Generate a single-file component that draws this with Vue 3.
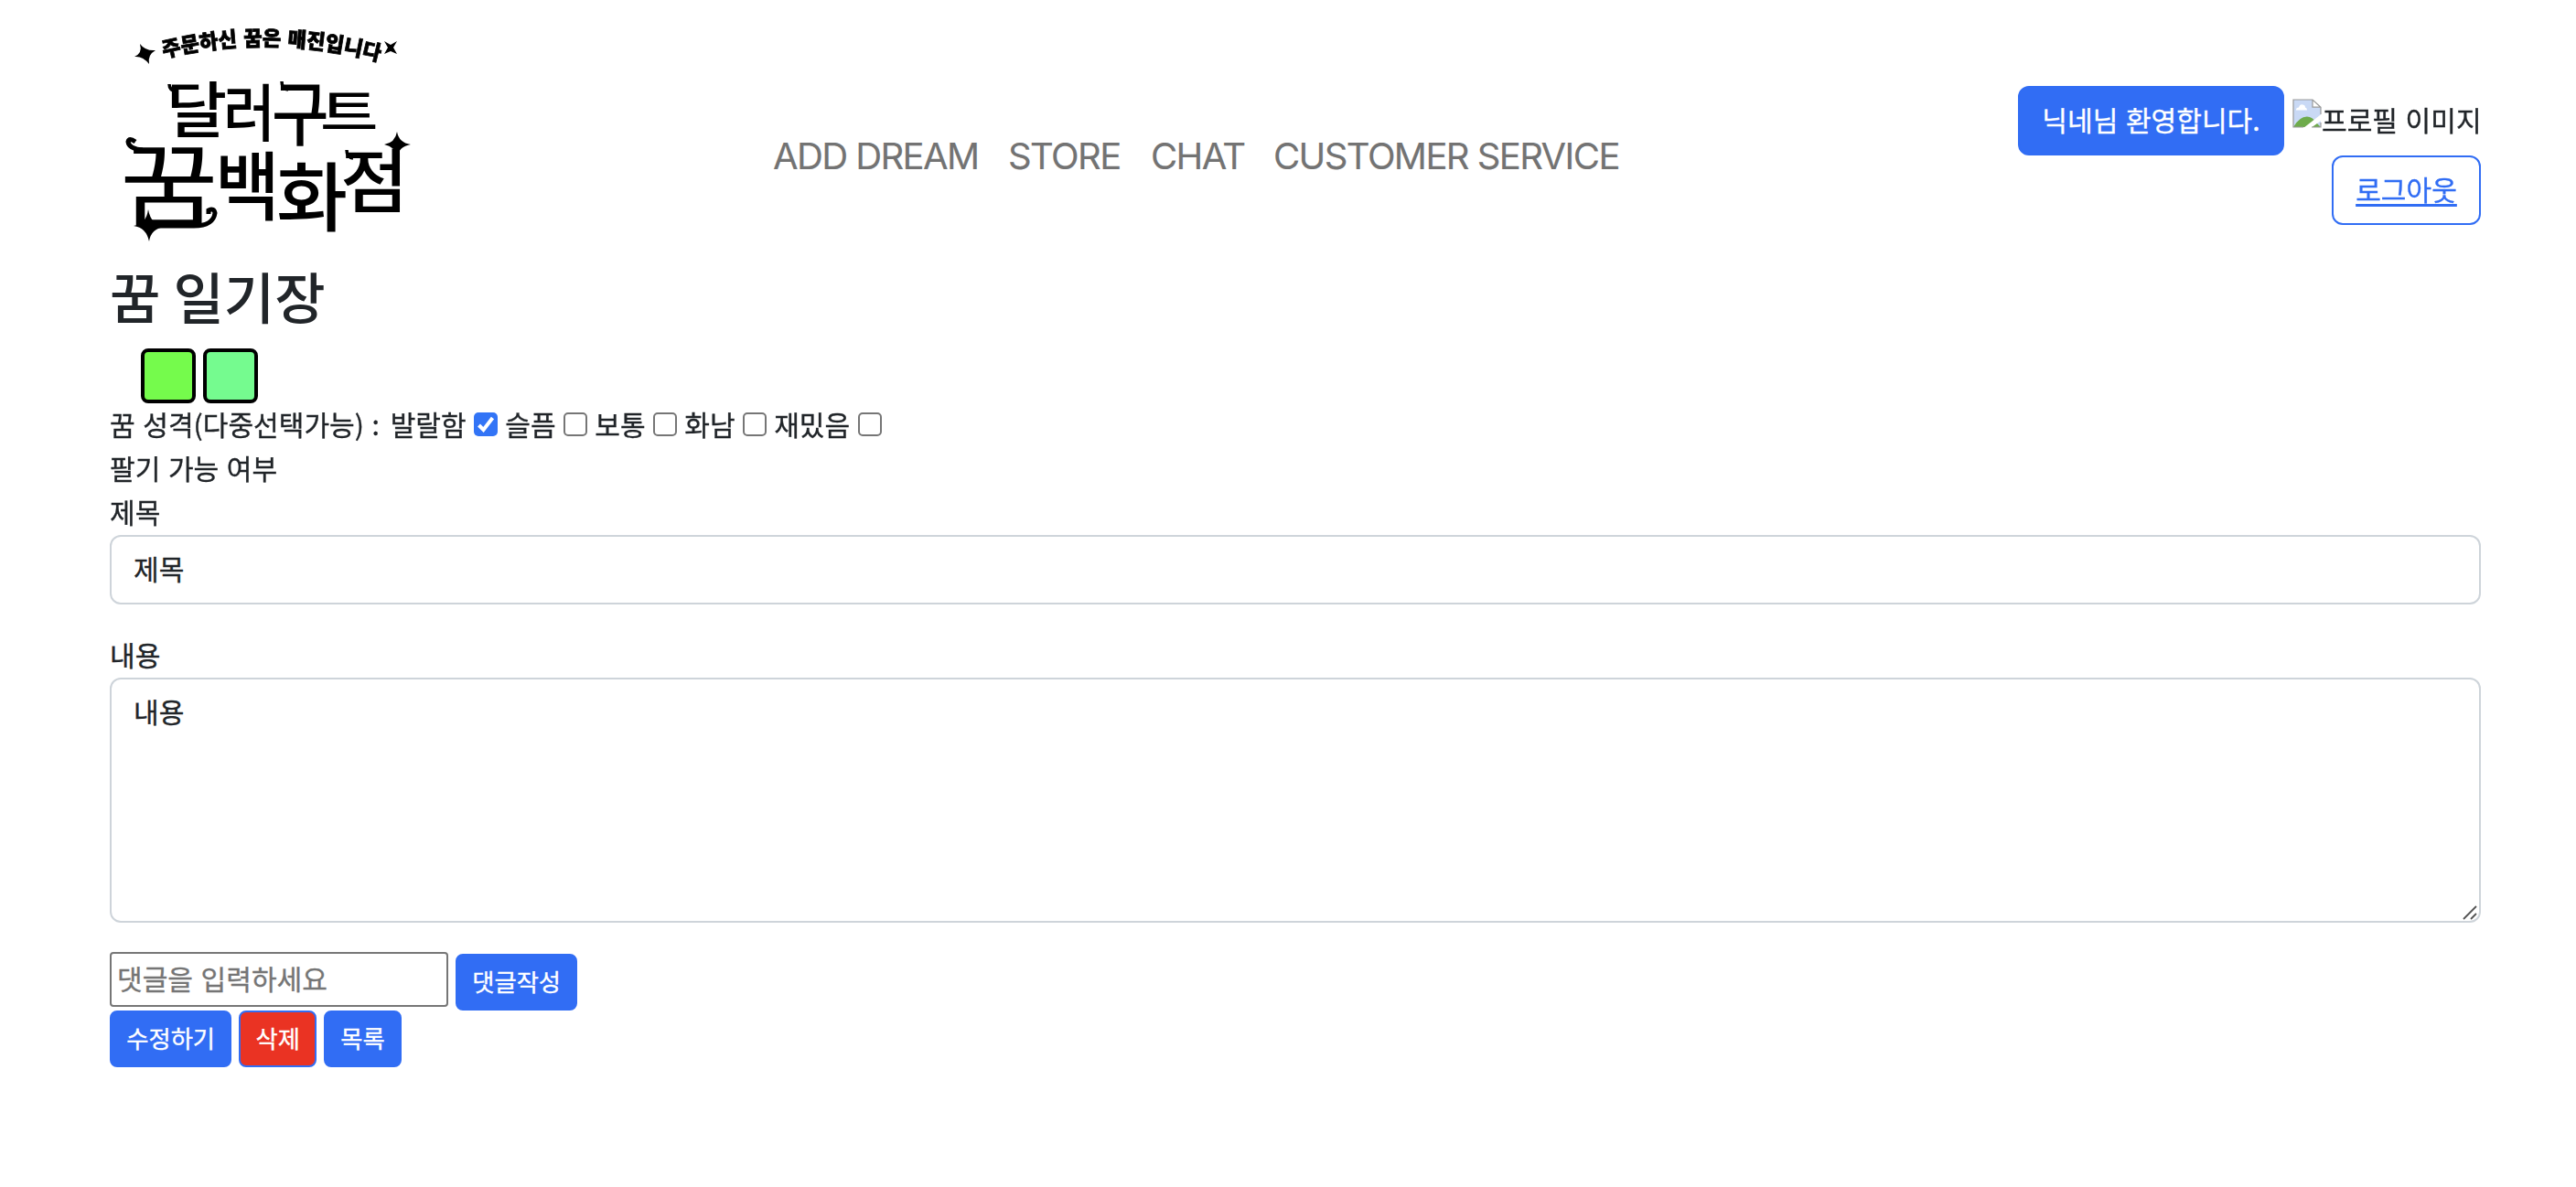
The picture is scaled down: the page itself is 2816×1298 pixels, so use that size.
<script setup>
import { ref } from 'vue'

const menus = [
  { label: 'ADD DREAM', cls: 'm-add' },
  { label: 'STORE', cls: 'm-store' },
  { label: 'CHAT', cls: 'm-chat' },
  { label: 'CUSTOMER SERVICE', cls: 'm-cs' }
]
const moods = ref([
  { label: '발랄함', on: true },
  { label: '슬픔', on: false },
  { label: '보통', on: false },
  { label: '화남', on: false },
  { label: '재밌음', on: false }
])
const letters = [
  { ch: '달', t: 'translate(182 145) scale(.72 .67)' },
  { ch: '러', t: 'translate(244 149) scale(.62 .68)' },
  { ch: '구', t: 'translate(297 153) scale(.68 .77)' },
  { ch: '트', t: 'translate(350 143) scale(.69 .54)' },
  { ch: '꿈', t: 'translate(131 240) scale(1.17 1)', large: true },
  { ch: '백', t: 'translate(235 234) scale(.77 .82)' },
  { ch: '화', t: 'translate(302 246) scale(.85 .82)' },
  { ch: '점', t: 'translate(372 226) scale(.81 .76)' }
]
const title = ref('제목')
const content = ref('내용')
const comment = ref('')
</script>

<template>
  <div class="container">
    <header>
      <a class="brand">
        <svg width="360" height="288" viewBox="120 0 360 288" role="img">
          <defs>
            <path id="arc" d="M179 63 Q297 35 418 68" />
          </defs>
          <g class="ink">
            <text class="tagline"><textPath href="#arc" textLength="238" lengthAdjust="spacingAndGlyphs">주문하신 꿈은 매진입니다</textPath></text>
            <text v-for="l in letters" :key="l.ch" class="glyph" :class="{ large: l.large }" :transform="l.t">{{ l.ch }}</text>
            <path d="M153 48Q159 56 170 55Q161 60 163 70Q156 61 147 62Q156 58 153 48Z" />
            <path d="M420 45L427 49L434 45L430 52L434 59L427 56L420 59L424 52Z" />
            <path d="M434 144Q436 156 449 158Q436 160 434 172Q432 160 420 158Q432 156 434 144Z" />
            <path d="M162 229Q165 246 180 248Q165 250 163 264Q160 249 146 247Q160 245 162 229Z" />
            <path class="stroke" d="M148 155Q141 150 140 155Q141 163 156 164" />
            <path class="stroke" d="M165 247H212Q233 247 235 233Q234 227 228 230V234" />
            <path class="thin" d="M185 92Q185 99 193 100M308 89Q308 97 315 98M379 164Q379 172 386 173" />
          </g>
        </svg>
      </a>
      <nav>
        <a v-for="m in menus" :key="m.label" :class="m.cls">{{ m.label }}</a>
      </nav>
      <div class="user">
        <div class="user-row">
          <button class="btn primary welcome">닉네님 환영합니다.</button>
          <span class="profile">
            <svg width="32" height="32" viewBox="0 0 16 16">
              <path d="M.5.5H11L15.5 5V15.5H.5Z" fill="#c9d9f5" />
              <path d="M2 6.2Q2 4.8 3.5 4.8Q4 3 5.5 3.2Q7 3.2 7 4.8Q8 5 8 6.2Z" fill="#fff" />
              <path d="M.5 15.5Q4 9.7 8 9.8Q11 10 13 13L15.5 15.5Z" fill="#6eab4b" />
              <path d="M16 8.3L6 16H10L16 11.7Z" fill="#fff" />
              <path d="M11 .5V4.6H15.5Z" fill="#fff" />
              <path d="M15.5 8.5V4.6L11 .5H.5V15.5H6M11 .5V4.6H15.5M15.5 13V15.5H10.5" fill="none" stroke="#999" stroke-width=".6" />
            </svg><span class="alt">프로필 이미지</span>
          </span>
        </div>
        <button class="btn outline">로그아웃</button>
      </div>
    </header>

    <h2>꿈 일기장</h2>
    <div class="swatches"><i class="lime"></i><i class="mint"></i></div>
    <div class="line moods">
      <span class="moods-title">꿈 성격(다중선택가능) :</span>
      <label v-for="m in moods" :key="m.label">{{ m.label }}
        <span class="box" :class="{ on: m.on }" @click="m.on = !m.on">
          <svg v-if="m.on" width="26" height="26" viewBox="0 0 26 26"><path d="M5.5 14L10.5 19L20.5 6" /></svg>
        </span>
      </label>
    </div>
    <div class="line">팔기 가능 여부</div>
    <div class="line">제목</div>
    <input v-model="title" class="control" />
    <div class="line second">내용</div>
    <div class="area">
      <textarea v-model="content" class="control"></textarea>
      <svg class="grip" width="16" height="16" viewBox="0 0 16 16"><path d="M1 15L15 1M9 15L15 9" /></svg>
    </div>
    <div class="comment">
      <input v-model="comment" placeholder="댓글을 입력하세요" />
      <button class="btn sm primary">댓글작성</button>
    </div>
    <div class="actions">
      <button class="btn sm primary">수정하기</button>
      <button class="btn sm primary danger">삭제</button>
      <button class="btn sm primary">목록</button>
    </div>
  </div>
</template>

<style>
body {
  background: #fff;
}
</style>

<style scoped>
* {
  box-sizing: border-box;
}
.container {
  width: 2592px;
  margin-left: 120px;
  height: 1298px;
  font-family: "Noto Sans CJK KR", sans-serif;
  font-size: 30.09px;
  font-weight: 400;
  -webkit-text-stroke-width: 0.35px;
  line-height: 48px;
  word-spacing: 1.8px;
  color: #212529;
}
header {
  display: flex;
  height: 288px;
}
.brand {
  display: block;
  width: 360px;
  height: 288px;
}
.ink {
  filter: blur(0.6px);
  fill: #000;
}
.glyph {
  font-size: 100px;
  font-weight: 500;
}
.glyph.large {
  font-weight: 400;
}
.tagline {
  font-size: 23px;
  font-weight: 900;
  stroke: #000;
  stroke-width: 0.8;
}
.stroke,
.thin {
  fill: none;
  stroke: #000;
  stroke-width: 5;
}
.thin {
  stroke-width: 3.5;
}
nav {
  display: flex;
  gap: 34px;
  margin-left: 365px;
  padding-top: 141px;
  font-family: Inter, sans-serif;
  font-size: 40px;
  -webkit-text-stroke-width: 0.15px;
  line-height: 60px;
  letter-spacing: -1.6px;
  word-spacing: 0;
  color: #737373;
  white-space: nowrap;
}
.m-add { width: 223px; }
.m-store { width: 122px; }
.m-chat { width: 100px; }
.m-cs { width: 376px; }
.user {
  display: flex;
  flex-direction: column;
  align-items: flex-end;
  margin-left: auto;
  padding-top: 94px;
}
.user-row {
  display: flex;
  gap: 9px;
}
.profile {
  display: flex;
  height: 76px;
  padding-top: 14px;
  white-space: nowrap;
}
.alt {
  width: 174px;
  margin-top: -2px;
}
.btn {
  height: 76px;
  padding: 0 0 4px;
  border: 2px solid #316df4;
  border-radius: 12px;
  font: inherit;
  word-spacing: inherit;
  line-height: 48px;
  text-align: center;
  white-space: nowrap;
}
.primary {
  background: #316df4;
  color: #fff;
}
.welcome {
  width: 291px;
}
.outline {
  width: 163px;
  background: #fff;
  color: #316df4;
  text-decoration: underline;
  text-underline-offset: 4px;
  text-decoration-thickness: 3px;
}
.sm {
  height: 62px;
  padding: 0 16.2px 3px;
  border-radius: 8px;
  font-size: 26.33px;
  line-height: 42px;
}
.danger {
  background: #ea3323;
}
h2 {
  height: 81px;
  margin: -4px 0 16px;
  font-size: 60.2px;
  font-weight: 500;
  -webkit-text-stroke-width: 0;
  line-height: 77px;
  word-spacing: 0.5px;
}
.swatches {
  display: flex;
  gap: 8px;
  padding-left: 34px;
}
.swatches i {
  width: 60px;
  height: 60px;
  border: 4px solid #000;
  border-radius: 8px;
}
.lime { background: #75fb4c; }
.mint { background: #75fb8f; }
.line {
  height: 48px;
  line-height: 44px;
}
.second {
  margin-top: 32px;
}
.moods,
.moods label {
  display: flex;
  gap: 8.3px;
  white-space: nowrap;
}
.moods-title {
  width: 298.4px;
}
.box {
  width: 26px;
  height: 26px;
  margin-top: 10px;
  border: 2px solid #767676;
  border-radius: 5px;
}
.box.on {
  border: 0;
  background: #3274f6;
}
.box svg {
  display: block;
  fill: none;
  stroke: #fff;
  stroke-width: 4;
}
.control {
  display: block;
  width: 100%;
  height: 76px;
  padding: 10px 24px 14px;
  border: 2px solid #ced4da;
  border-radius: 12px;
  background: #fff;
  color: #212529;
  font: inherit;
  outline: 0;
}
.area {
  position: relative;
}
textarea.control {
  height: 268px;
  resize: none;
}
.grip {
  position: absolute;
  right: 4px;
  bottom: 3px;
  fill: none;
  stroke: #555;
  stroke-width: 1.8;
}
.comment {
  display: flex;
  gap: 8px;
  height: 64px;
  margin-top: 32px;
}
.comment input {
  width: 370px;
  height: 60px;
  padding: 0 6px 4px;
  border: 2px solid #767676;
  border-radius: 4px;
  background: #fff;
  font: inherit;
  word-spacing: inherit;
  outline: 0;
}
.comment input::placeholder {
  color: #757575;
}
.comment .btn {
  margin-top: 2px;
}
.actions {
  display: flex;
  gap: 8px;
}
</style>
